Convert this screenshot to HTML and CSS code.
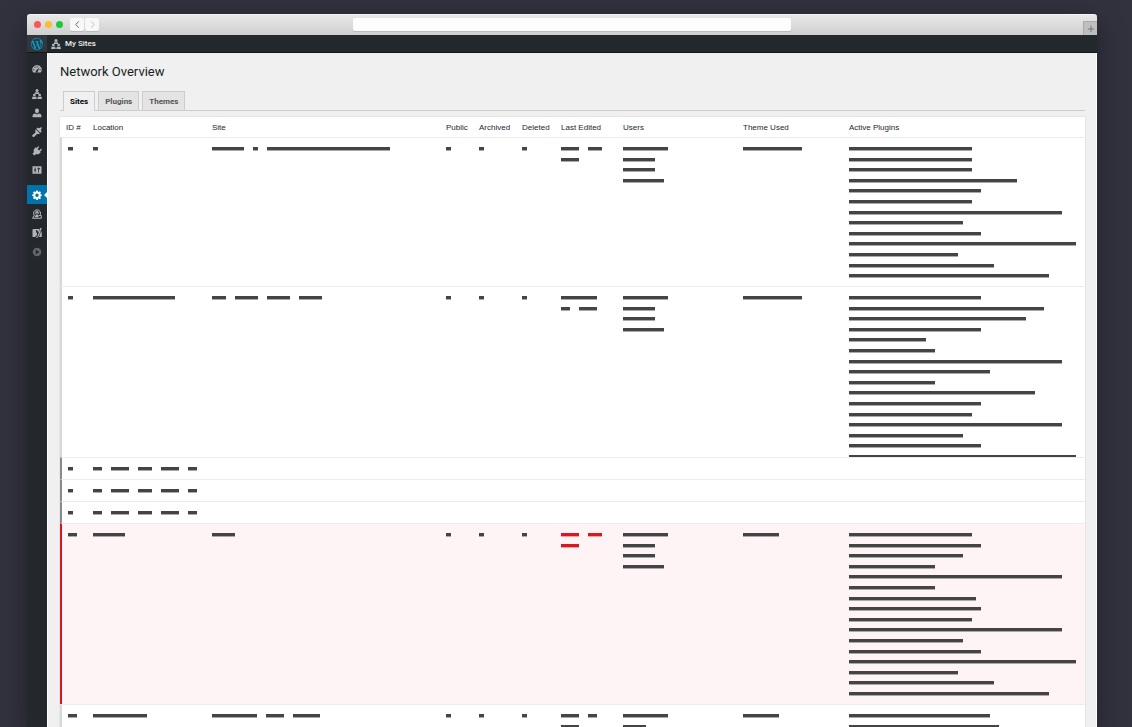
FILE: index.html
```html
<!DOCTYPE html>
<html lang="en">
<head>
<meta charset="utf-8">
<title>Network Overview</title>
<link rel="stylesheet" href="styles.css">
</head>
<body>
<svg class="sprite" aria-hidden="true">
  <symbol id="i-sites" viewBox="0 0 20 20">
    <circle cx="10" cy="3" r="3"/><path d="M5 10 6.600 6.300 8.600 6 10 7.500 11.400 6l2 .3L15 10z"/>
    <circle cx="4.700" cy="12" r="2.700"/><path d="M0 20 1 15.600l2.300-.8 1.400 1.400 1.400-1.400 2.300.8L9.500 20z"/>
    <circle cx="15.300" cy="12" r="2.700"/><path d="M10.500 20 11.600 15.600l2.300-.8 1.400 1.400 1.400-1.400 2.300.8L20 20z"/>
  </symbol>
</svg>
<div class="window">
  <header class="titlebar">
    <div class="lights"><span class="light red"></span><span class="light yellow"></span><span class="light green"></span></div>
    <div class="history">
      <button type="button" aria-label="Back"><svg viewBox="0 0 10 10"><path d="M6.5 1.5 3 5l3.500 3.500"/></svg></button>
      <button type="button" aria-label="Forward" disabled><svg viewBox="0 0 10 10"><path d="M3.500 1.500 7 5 3.500 8.500"/></svg></button>
    </div>
    <input class="address" type="text" aria-label="Address">
    <button class="new-tab" type="button" aria-label="New tab"><svg viewBox="0 0 10 10"><path d="M5 1v8M1 5h8"/></svg></button>
  </header>
  <div class="adminbar">
    <a class="wp" href="#" aria-label="WordPress"><svg viewBox="0 0 24 24"><path d="M21.469 6.825c.84 1.537 1.318 3.3 1.318 5.175 0 3.979-2.156 7.456-5.363 9.325l3.295-9.527c.615-1.54.82-2.771.82-3.864 0-.405-.026-.78-.07-1.11m-7.981.105c.647-.03 1.232-.105 1.232-.105.582-.075.514-.93-.067-.899 0 0-1.755.135-2.88.135-1.064 0-2.85-.15-2.85-.15-.585-.03-.661.855-.075.885 0 0 .54.061 1.125.09l1.68 4.605-2.37 7.08L5.354 6.9c.649-.03 1.234-.1 1.234-.1.585-.075.516-.93-.065-.896 0 0-1.746.138-2.874.138-.2 0-.438-.008-.69-.015C4.911 3.15 8.235 1.215 12 1.215c2.809 0 5.365 1.072 7.286 2.833-.046-.003-.091-.009-.141-.009-1.06 0-1.812.923-1.812 1.914 0 .89.513 1.643 1.06 2.531.411.72.89 1.643.89 2.977 0 .915-.354 1.994-.821 3.479l-1.075 3.585-3.9-11.61.001.014zM12 22.784c-1.059 0-2.081-.153-3.048-.437l3.237-9.406 3.315 9.087c.024.053.05.101.078.149-1.12.393-2.325.609-3.582.609M1.211 12c0-1.564.336-3.05.935-4.39L7.29 21.709C3.694 19.96 1.212 16.271 1.211 12M12 0C5.385 0 0 5.385 0 12s5.385 12 12 12 12-5.385 12-12S18.615 0 12 0"/></svg></a>
    <a class="my-sites" href="#"><svg><use href="#i-sites"/></svg>My Sites</a>
  </div>
  <div class="body">
    <nav class="menu" aria-label="Admin menu">
      <a href="#" aria-label="Dashboard"><svg viewBox="0 0 20 20"><path fill-rule="evenodd" d="M10 2a9.300 9.300 0 0 0-7.400 15h14.800A9.300 9.300 0 0 0 10 2zM9 4h2v2.500H9zM4.500 6.200 6 4.800l1.500 1.700L6 8zM2.500 10.500H5v2H2.500zM15 10.500h2.500v2H15zM8 13.500 15 6l-3.500 9a2 2 0 1 1-3.500-1.500z"/></svg></a>
      <a class="group" href="#" aria-label="Sites"><svg><use href="#i-sites"/></svg></a>
      <a href="#" aria-label="Users"><svg viewBox="0 0 20 20"><path d="M10 1a4 4 0 0 1 4 4.300C14 8 12.200 10.500 10 10.500S6 8 6 5.300A4 4 0 0 1 10 1zM6 11l4 2 4-2 3 1.200c1.300.6 2 3 2 6.300H1c0-3.300.7-5.700 2-6.300z"/></svg></a>
      <a href="#" aria-label="Themes"><svg viewBox="0 0 20 20"><path d="M8.500 3.500 11.500.8l2.300 1.900c2-.2 3.200-1.500 4.700-2.500L20 2c-.8 1.600-2 2.800-2.500 4.500L19.500 8.500l-2.800 3zM7.500 4.500l8.500 8.500-2.500 1c-2 .3-3.500-.2-4.500 1L4.500 19.300c-2.300 1.500-5-1-3.600-3.300L6 12c1.500-1.500.5-3.500.5-5.500z"/></svg></a>
      <a href="#" aria-label="Plugins"><svg viewBox="0 0 20 20"><path d="M12.200.8c1.200-1 2.800.7 1.800 1.800L11.200 5.800l3 3L17.500 6c1.200-1 2.800.7 1.800 1.800l-3 3.300 1.200 1.200-2.500 2.500c-2 2-4.800 2.400-6.900 1.200L4.500 19 1 15.500l3-3.400c-1.300-2.200-1-5 1-7L7.600 2.700l1.200 1.200z"/></svg></a>
      <a href="#" aria-label="Settings"><svg viewBox="0 0 20 20"><path fill-rule="evenodd" d="M1 2.500h18v15H1zM5.500 5v4H4v2h1.500v4H7v-4h1.500V9H7V5zM12.500 5v1.500H11v2h1.500V15H14V8.500h2v-2h-2V5z"/></svg></a>
      <a class="group current" href="#" aria-label="Network overview"><svg viewBox="0 0 20 20"><path fill-rule="evenodd" d="M8.300 1h3.400l.5 2.500 1.300.6L15.700 2.700 18 5l-1.500 2.200.6 1.300 2.400.5v3l-2.400.5-.6 1.300L18 16l-2.300 2.300-2.200-1.500-1.300.6-.5 2.400H8.300l-.5-2.400-1.300-.6-2.200 1.500L2 16l1.500-2.200-.6-1.300L.5 12V9l2.400-.5.6-1.300L2 5l2.300-2.300 2.200 1.400 1.300-.6zM10 7a3.500 3.500 0 1 0 0 7 3.500 3.500 0 0 0 0-7z"/></svg></a>
      <a href="#" aria-label="Security"><svg viewBox="0 0 20 20"><path class="stroke" d="M4 12a7 7 0 1 1 12.500-.5M1 18.500l4-7M1 18.500h17.500V13h-5M7 9.500a3.500 3.500 0 1 1 6 0M5.500 15.500h7"/><circle cx="10" cy="7.500" r="2"/><path d="M6 16c.5-4 2-5 4-5s3 1 3 5z"/></svg></a>
      <a href="#" aria-label="SEO"><svg viewBox="0 0 20 20"><path fill-rule="evenodd" d="M3 2h12l-2.500 7L10.500 4.500H7.200L10.500 13c-.6 1.700-1.400 2.500-3.300 2.500V18H1V4a2 2 0 0 1 2-2zM16.500 0h3L13.500 15.500c-1 2.500-2.300 4-5 4.300v-2c2-.3 2.500-1.500 3-3z"/><path d="M18 7h1.500v11H14z"/></svg></a>
      <a class="dim" href="#" aria-label="Collapse menu"><svg viewBox="0 0 20 20"><path fill-rule="evenodd" d="M10 1.500a8.500 8.500 0 1 0 0 17 8.500 8.500 0 0 0 0-17zM7.500 5.500v9L14.500 10z"/></svg></a>
    </nav>
    <main class="content">
      <h1>Network Overview</h1>
      <nav class="tabs" aria-label="Sections">
        <a class="tab active" href="#">Sites</a><a class="tab" href="#">Plugins</a><a class="tab" href="#">Themes</a>
      </nav>
      <table class="sites">
        <colgroup><col class="c-id"><col class="c-location"><col class="c-site"><col class="c-public"><col class="c-archived"><col class="c-deleted"><col class="c-edited"><col class="c-users"><col class="c-theme"><col></colgroup>
        <thead><tr><th>ID #</th><th>Location</th><th>Site</th><th>Public</th><th>Archived</th><th>Deleted</th><th>Last Edited</th><th>Users</th><th>Theme Used</th><th>Active Plugins</th></tr></thead>
        <tbody id="rows"></tbody>
      </table>
    </main>
  </div>
</div>
<script src="rows.js"></script>
</body>
</html>
```
FILE: rows.js
```js
// Each cell is a list of lines; each line lists the lengths of its redacted words.
const lines = text => text ? text.split('/').map(l => l.trim().split(' ').map(Number)) : [];
const sites = [
  { kind: 'live', cells: ['1', '1', '7 1 27', '1', '1', '1', '4 3/4', '10/7/7/9', '13',
    '27/27/27/37/29/27/47/25/29/50/24/32/44'] },
  { kind: 'live clipped', cells: ['1', '18', '3 5 5 5', '1', '1', '1', '8/2 4', '10/7/7/9', '13',
    '29/43/39/29/17/19/47/31/19/41/29/27/47/25/29/50'] },
  { kind: 'archived', cells: ['1', '2 4 3 4 2', '', '', '', '', '', '', '', ''] },
  { kind: 'archived', cells: ['1', '2 4 3 4 2', '', '', '', '', '', '', '', ''] },
  { kind: 'archived', cells: ['1', '2 4 3 4 2', '', '', '', '', '', '', '', ''] },
  { kind: 'stale', cells: ['2', '7', '5', '1', '1', '1', '4 3/4', '10/7/7/9', '8',
    '27/29/25/19/47/19/28/29/27/47/25/29/50/24/32/44'] },
  { kind: 'live', cells: ['2', '12', '10 4 6', '1', '1', '1', '4 2/4', '10/5/7/9', '8',
    '31/33/27/29'] }
];
const charWidth = 4.54;
document.getElementById('rows').innerHTML = sites.map(site =>
  `<tr class="${site.kind}">` + site.cells.map(cell =>
    '<td><div class="lines">' + lines(cell).map(line =>
      '<div class="line">' + line.map(n =>
        `<span class="word" style="width:${Math.round(n * charWidth)}px"></span>`).join('') + '</div>'
    ).join('') + '</div></td>').join('') + '</tr>').join('');
```
FILE: styles.css
```css
* { box-sizing: border-box; }
body {
  margin: 0;
  height: 100vh;
  overflow: hidden;
  display: flex;
  background: #31323e;
  font: 8px/10px Roboto, Inter, sans-serif;
  color: #23282d;
}
a { color: inherit; text-decoration: none; }
svg { display: block; fill: currentColor; }
.sprite { position: absolute; width: 0; height: 0; }

.window {
  flex: 1;
  min-width: 0;
  margin: 14px 35px 0 27px;
  display: flex;
  flex-direction: column;
  border-radius: 3px 3px 0 0;
  box-shadow: 0 8px 28px rgba(0, 0, 0, .35);
}
.titlebar {
  display: flex;
  align-items: center;
  justify-content: space-between;
  height: 21px;
  flex: none;
  padding-left: 7px;
  background: linear-gradient(#e8e8e8, #cfcfcf);
  border-top: 1px solid #f5f5f5;
  border-radius: 3px 3px 0 0;
}
.lights { display: flex; gap: 4px; }
.light { width: 7px; height: 7px; border-radius: 50%; }
.red { background: #fc5753; }
.yellow { background: #fdbc2e; }
.green { background: #1ec935; }
.history { display: flex; gap: 1px; margin-left: 7px; }
.history button {
  display: grid;
  place-items: center;
  width: 14px;
  height: 13px;
  padding: 0;
  border: 0;
  border-radius: 2px;
  background: #f8f8f8;
  color: #555;
  box-shadow: 0 1px 0 #bbb;
}
.history button:disabled { color: #bbb; }
.history svg { width: 9px; height: 9px; }
.history path, .new-tab path { fill: none; stroke: currentColor; stroke-width: 1; }
.titlebar > .lights, .titlebar > .history, .titlebar > .address { margin-bottom: 1px; }
.address {
  width: 438px;
  height: 13px;
  margin: 0 auto;
  padding: 0 4px;
  border: 0;
  border-radius: 2px;
  background: #fdfdfd;
  box-shadow: 0 1px 0 #bbb;
  font: inherit;
}
.new-tab {
  align-self: flex-end;
  display: grid;
  place-items: center;
  width: 14px;
  height: 14px;
  margin-left: 38px;
  padding: 0;
  border: 1px solid #aaa;
  border-width: 1px 0 0 1px;
  background: #bfbfbf;
  color: #666;
}
.new-tab svg { width: 8px; height: 8px; }

.adminbar {
  display: flex;
  flex: none;
  height: 18px;
  background: #23282d;
  border-bottom: 1px solid #15181b;
  color: #eee;
}
.wp {
  display: grid;
  place-items: center;
  width: 20px;
  background: #32373c;
  color: #00a0d2;
}
.wp svg { width: 12px; height: 12px; }
.my-sites { display: flex; align-items: center; gap: 4px; padding: 1px 0 0 4px; font-weight: 500; }
.my-sites svg { width: 10px; height: 10px; color: #b4b9be; }

.body { display: flex; flex: 1; min-height: 0; }
.menu {
  width: 20px;
  flex: none;
  padding-top: 6px;
  background: #23282d;
  color: #b0b5ba;
}
.menu a { display: grid; place-items: center; height: 19px; }
.menu svg { width: 10px; height: 10px; }
.menu .group { margin-top: 6px; }
.menu .current { position: relative; background: #0073aa; color: #fff; }
.menu .current::after {
  content: "";
  position: absolute;
  right: 0;
  top: 7px;
  border: 3px solid transparent;
  border-left: 0;
  border-right-color: #f1f1f1;
}
.menu .dim { color: #62676c; }
.stroke { fill: none; stroke: currentColor; stroke-width: 2; }

.content {
  flex: 1;
  min-width: 0;
  padding: 11px 11px 0 12px;
  background: #f0f0f0;
  border: solid #fff;
  border-width: 0 1px;
  overflow: hidden;
}
h1 { margin: 0; font-size: 13px; line-height: 16px; font-weight: 400; color: #191e23; }
.tabs {
  display: flex;
  gap: 3px;
  margin-top: 11px;
  padding-left: 3px;
  border-bottom: 1px solid #ccc;
}
.tab {
  padding: 5px 6px 3px;
  border: 1px solid #ccc;
  border-bottom: 0;
  background: #e4e4e4;
  color: #555;
  font-weight: 700;
}
.tab.active { margin-bottom: -1px; background: #f0f0f0; color: #000; }

.sites {
  width: 100%;
  margin-top: 6px;
  table-layout: fixed;
  border-collapse: separate;
  border-spacing: 0;
  background: #fff;
  box-shadow: 0 0 0 1px #e6e6e6;
}
.c-id { width: 27px; }
.c-location { width: 119px; }
.c-site { width: 234px; }
.c-public { width: 33px; }
.c-archived { width: 43px; }
.c-deleted { width: 39px; }
.c-edited { width: 62px; }
.c-users { width: 120px; }
.c-theme { width: 106px; }
th { padding: 6px 0 4px 6px; text-align: left; font-family: "Liberation Sans", Arial, sans-serif; font-weight: 400; white-space: nowrap; }
td { padding: 9px 0 1px 6px; vertical-align: top; border-top: 1px solid #ececec; }
td:first-child { border-left: 2px solid #d8d8d8; }
.archived td:first-child { border-left-color: #8a8a8a; }
.stale td { background: #fef4f5; }
.stale td:first-child { border-left-color: #d9141e; }
.line { display: flex; gap: 9px; height: 4px; margin-bottom: 7px; }
.line:nth-child(5n+2), .line:nth-child(5n+4) { margin-bottom: 6px; }
.word { background: #444; border-bottom: 1px solid #aaa; }
.stale td:nth-child(7) .word { background: #da1820; border-bottom-color: #f0a0a4; }
.clipped td { padding-bottom: 0; }
.clipped .lines { max-height: 161px; overflow: hidden; }
```
